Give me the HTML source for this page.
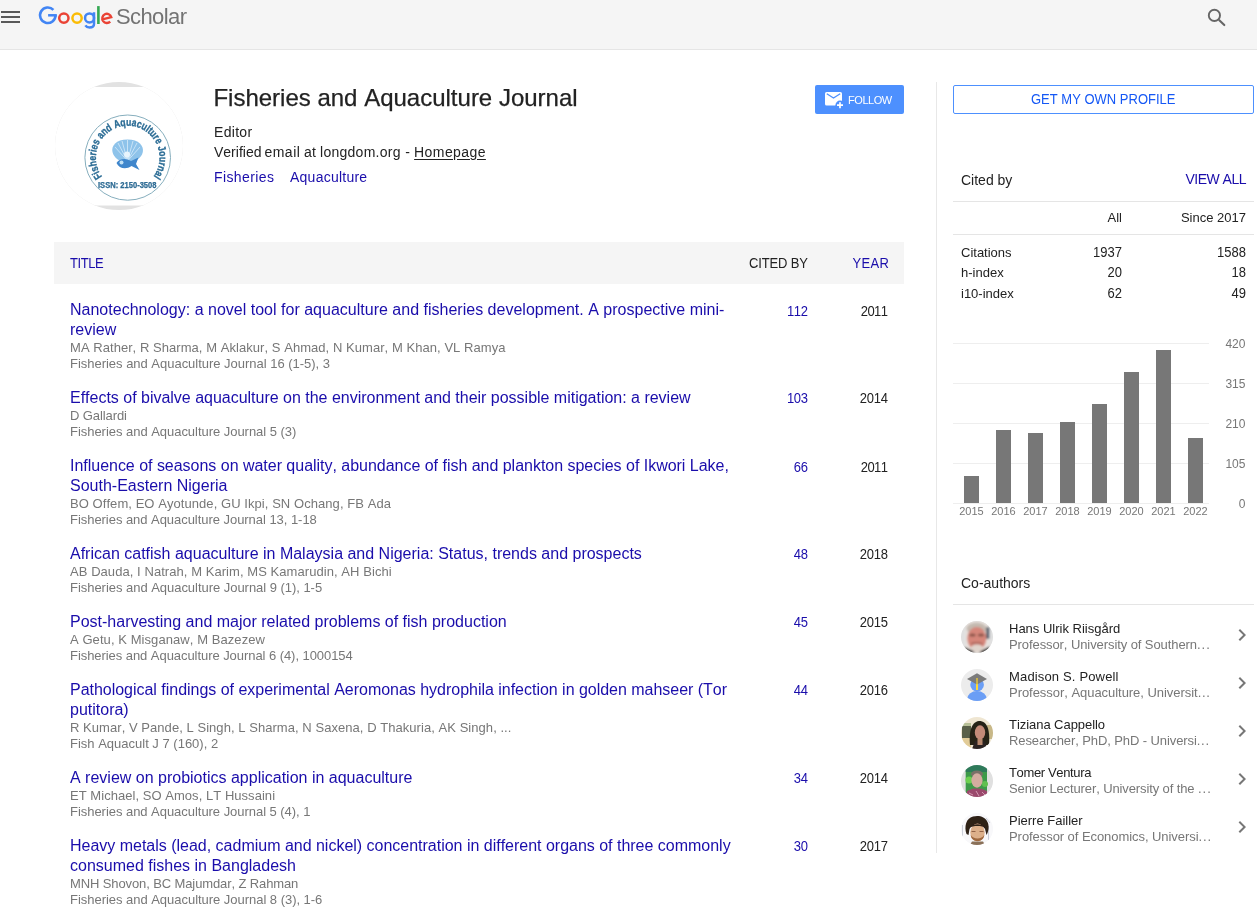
<!DOCTYPE html>
<html><head><meta charset="utf-8">
<style>
*{margin:0;padding:0;box-sizing:border-box}
html,body{width:1257px;height:910px;overflow:hidden;background:#fff}
body{font-family:"Liberation Sans",sans-serif;color:#222;font-size:13px;position:relative;-webkit-font-smoothing:antialiased;font-kerning:none}
.a{position:absolute;white-space:nowrap}
#root{position:absolute;left:0;top:0;width:1257px;height:910px;will-change:transform}
</style></head><body><div id="root">
<div class="a" style="left:0;top:0;width:1257px;height:49px;background:#f5f5f5"></div>
<div class="a" style="left:0;top:49px;width:1257px;height:1px;background:#e5e5e5"></div>
<svg class="a" style="left:-2px;top:5px" width="24" height="24" viewBox="0 0 24 24"><path fill="#595959" d="M3 18h19v-2H3v2zm0-5h19v-2H3v2zm0-7v2h19V6H3z"/></svg>
<svg class="a" style="left:0;top:0" width="200" height="40" viewBox="0 0 200 40">
<path d="M53.4 9.9 A7.75 7.75 0 1 0 55.55 15.3" fill="none" stroke="#4285f4" stroke-width="2.6"/>
<rect x="48.1" y="14.05" width="8.75" height="2.5" fill="#4285f4"/>
<circle cx="63.85" cy="18.1" r="4.65" fill="none" stroke="#ea4335" stroke-width="2.5"/>
<circle cx="77.05" cy="18.1" r="4.65" fill="none" stroke="#fbbc05" stroke-width="2.5"/>
<circle cx="89.55" cy="17.9" r="4.5" fill="none" stroke="#4285f4" stroke-width="2.5"/>
<path d="M94 12.2 V24 C94 26.6 92.1 27.5 89.6 27.5 C87.6 27.5 86.2 26.7 85.4 25.4" fill="none" stroke="#4285f4" stroke-width="2.5"/>
<rect x="97.1" y="6.1" width="2.6" height="17.9" fill="#34a853"/>
<path d="M102.3 19.3 L111.3 17.2 A4.6 4.6 0 1 0 110.2 21.6" fill="none" stroke="#ea4335" stroke-width="2.4"/>
</svg>
<div class="a" style="left:116px;top:2px;font-size:22px;line-height:30px;color:#737373;letter-spacing:-0.6px">Scholar</div>
<svg class="a" style="left:1200px;top:3px" width="32" height="30" viewBox="0 0 32 30"><circle cx="14.4" cy="12.4" r="5.6" fill="none" stroke="#666" stroke-width="1.9"/><path d="M19.3 17.2 L24.3 22.1" stroke="#666" stroke-width="2.1" stroke-linecap="round"/></svg>
<svg class="a" style="left:55px;top:82px" width="128" height="128" viewBox="55 82 128 128">
<defs><clipPath id="pc"><circle cx="119" cy="146" r="64"/></clipPath>
<path id="arc" d="M102.3 176.7 A31.8 31.8 0 1 1 153.1 176.7"/></defs>
<g clip-path="url(#pc)">
<rect x="55" y="82" width="128" height="128" fill="#e2e2e2"/>
<rect x="55" y="87" width="128" height="118.5" fill="#fff"/>
<ellipse cx="127.7" cy="157.6" rx="42.8" ry="42.6" fill="none" stroke="#86aebd" stroke-width="1"/>
<text font-family="Liberation Sans" font-weight="bold" font-size="10.8" fill="#2b6c95" stroke="#2b6c95" stroke-width="0.35"><textPath href="#arc" textLength="140" lengthAdjust="spacingAndGlyphs">Fisheries and Aquaculture Journal</textPath></text>
<text x="98" y="187.6" font-family="Liberation Sans" font-weight="bold" font-size="8.2" fill="#2d6b94" stroke="#2d6b94" stroke-width="0.25" textLength="58.5" lengthAdjust="spacingAndGlyphs">ISSN: 2150-3508</text>
<path d="M112.5 152 C111 146 116 139.5 127.5 139.5 C139 139.5 144 146 142.8 152 C141.5 158 136 162 127.5 162 C119 162 114 158 112.5 152 Z" fill="#8ec3ea"/>
<g stroke="#cfe6f7" stroke-width="0.9">
<path d="M127.5 161 L115 147"/><path d="M127.5 161 L118 143"/><path d="M127.5 161 L122 141"/><path d="M127.5 161 L127.5 140"/><path d="M127.5 161 L133 141"/><path d="M127.5 161 L137 143"/><path d="M127.5 161 L140 147"/>
</g>
<circle cx="127" cy="154.5" r="3" fill="#e8f4fc"/>
<path d="M116.5 163 C119 158.5 126 157.5 131 161 L138.5 157.5 L136 164 L139.5 170 L131.5 166 C126 170 119 168.5 116.5 163 Z" fill="#3f86cc"/>
<circle cx="121.5" cy="162.5" r="2" fill="#bfe0f5"/>
</g></svg>
<div class="a" style="left:213.4px;top:85.68px;font-size:24px;line-height:24px;color:#222;-webkit-text-stroke:0.25px #222">Fisheries and Aquaculture Journal</div>
<div class="a" style="left:214px;top:124.65px;font-size:14px;line-height:14px;color:#222;letter-spacing:0.3px">Editor</div>
<div class="a" style="left:214px;top:144.65px;font-size:14px;line-height:14px;color:#222;letter-spacing:0px">Verified</div>
<div class="a" style="left:264.4px;top:144.65px;font-size:14px;line-height:14px;color:#222;letter-spacing:0.5px">email</div>
<div class="a" style="left:304px;top:144.65px;font-size:14px;line-height:14px;color:#222;letter-spacing:0.2px">at</div>
<div class="a" style="left:320.05px;top:144.65px;font-size:14px;line-height:14px;color:#222;letter-spacing:0.26px">longdom.org</div>
<div class="a" style="left:405.2px;top:144.65px;font-size:14px;line-height:14px;color:#222;letter-spacing:0px">-</div>
<div class="a" style="left:414.1px;top:144.65px;font-size:14px;line-height:14px;color:#222;letter-spacing:0.41px"><span style="text-decoration:underline;text-underline-offset:2.4px">Homepage</span></div>
<div class="a" style="left:214px;top:169.65px;font-size:14px;line-height:14px;color:#1a0dab;"><span style="color:#1a0dab;letter-spacing:0.4px">Fisheries</span><span style="color:#1a0dab;margin-left:15.6px;letter-spacing:0.24px">Aquaculture</span></div>
<div class="a" style="left:815px;top:85px;width:89px;height:29px;background:#4d90fe;border-radius:2px"></div>
<svg class="a" style="left:820px;top:88px" width="28" height="24" viewBox="820 88 28 24"><rect x="825" y="92" width="17" height="13.5" rx="1.6" fill="#fff"/><path d="M826.8 93.8 L833.5 98 L840.2 93.8" fill="none" stroke="#4d90fe" stroke-width="1.3"/><circle cx="840" cy="105.2" r="4.6" fill="#4d90fe"/><path d="M840 102.2 V108.2 M837 105.2 H843" stroke="#fff" stroke-width="1.7"/></svg>
<div class="a" style="left:848px;top:94.69px;font-size:11px;line-height:11px;color:#fff;letter-spacing:-0.44px">FOLLOW</div>
<div class="a" style="left:936px;top:82px;width:1px;height:771px;background:#e8e8e8"></div>
<div class="a" style="left:54px;top:242px;width:850px;height:42px;background:#f5f5f5"></div>
<div class="a" style="left:70px;top:257.00px;font-size:13px;line-height:13px;color:#1a0dab;transform:scaleY(1.07);transform-origin:0 11.00px;letter-spacing:-0.4px">TITLE</div>
<div class="a" style="right:449px;top:257.00px;font-size:13px;line-height:13px;color:#222;text-align:right;transform:scaleY(1.07);transform-origin:0 11.00px;letter-spacing:-0.15px;margin-right:0.15px">CITED BY</div>
<div class="a" style="right:369px;top:257.00px;font-size:13px;line-height:13px;color:#1a0dab;text-align:right;transform:scaleY(1.07);transform-origin:0 11.00px;letter-spacing:0.3px;margin-right:-1.1px">YEAR</div>
<div class="a" style="left:70px;top:302.46px;font-size:16px;line-height:16px;color:#1a0dab;letter-spacing:0.0078px">Nanotechnology: a novel tool for aquaculture and fisheries development. A prospective mini-</div>
<div class="a" style="left:70px;top:322.46px;font-size:16px;line-height:16px;color:#1a0dab;letter-spacing:0.0000px">review</div>
<div class="a" style="left:70px;top:341.00px;font-size:13px;line-height:13px;color:#777;letter-spacing:0.0523px">MA Rather, R Sharma, M Aklakur, S Ahmad, N Kumar, M Khan, VL Ramya</div>
<div class="a" style="left:70px;top:357.00px;font-size:13px;line-height:13px;color:#777;letter-spacing:-0.0205px">Fisheries and Aquaculture Journal 16 (1-5), 3</div>
<div class="a" style="right:449px;top:305.00px;font-size:13px;line-height:13px;color:#1a0dab;text-align:right;transform:scaleY(1.07);transform-origin:0 11.00px;letter-spacing:-0.3px;margin-right:0.3px">112</div>
<div class="a" style="right:369px;top:305.00px;font-size:13px;line-height:13px;color:#222;text-align:right;transform:scaleY(1.07);transform-origin:0 11.00px;letter-spacing:-0.55px;margin-right:0.55px">2011</div>
<div class="a" style="left:70px;top:390.46px;font-size:16px;line-height:16px;color:#1a0dab;letter-spacing:-0.0125px">Effects of bivalve aquaculture on the environment and their possible mitigation: a review</div>
<div class="a" style="left:70px;top:409.00px;font-size:13px;line-height:13px;color:#777;letter-spacing:-0.1000px">D Gallardi</div>
<div class="a" style="left:70px;top:425.00px;font-size:13px;line-height:13px;color:#777;letter-spacing:-0.0342px">Fisheries and Aquaculture Journal 5 (3)</div>
<div class="a" style="right:449px;top:392.00px;font-size:13px;line-height:13px;color:#1a0dab;text-align:right;transform:scaleY(1.07);transform-origin:0 11.00px;letter-spacing:-0.3px;margin-right:0.3px">103</div>
<div class="a" style="right:369px;top:392.00px;font-size:13px;line-height:13px;color:#222;text-align:right;transform:scaleY(1.07);transform-origin:0 11.00px;letter-spacing:-0.2px;margin-right:0.2px">2014</div>
<div class="a" style="left:70px;top:458.46px;font-size:16px;line-height:16px;color:#1a0dab;letter-spacing:-0.0217px">Influence of seasons on water quality, abundance of fish and plankton species of Ikwori Lake,</div>
<div class="a" style="left:70px;top:478.46px;font-size:16px;line-height:16px;color:#1a0dab;letter-spacing:0.0000px">South-Eastern Nigeria</div>
<div class="a" style="left:70px;top:497.00px;font-size:13px;line-height:13px;color:#777;letter-spacing:0.0625px">BO Offem, EO Ayotunde, GU Ikpi, SN Ochang, FB Ada</div>
<div class="a" style="left:70px;top:513.00px;font-size:13px;line-height:13px;color:#777;letter-spacing:-0.0439px">Fisheries and Aquaculture Journal 13, 1-18</div>
<div class="a" style="right:449px;top:461.00px;font-size:13px;line-height:13px;color:#1a0dab;text-align:right;transform:scaleY(1.07);transform-origin:0 11.00px;letter-spacing:-0.3px;margin-right:0.3px">66</div>
<div class="a" style="right:369px;top:461.00px;font-size:13px;line-height:13px;color:#222;text-align:right;transform:scaleY(1.07);transform-origin:0 11.00px;letter-spacing:-0.55px;margin-right:0.55px">2011</div>
<div class="a" style="left:70px;top:546.46px;font-size:16px;line-height:16px;color:#1a0dab;letter-spacing:0.0000px">African catfish aquaculture in Malaysia and Nigeria: Status, trends and prospects</div>
<div class="a" style="left:70px;top:565.00px;font-size:13px;line-height:13px;color:#777;letter-spacing:0.0600px">AB Dauda, I Natrah, M Karim, MS Kamarudin, AH Bichi</div>
<div class="a" style="left:70px;top:581.00px;font-size:13px;line-height:13px;color:#777;letter-spacing:-0.0349px">Fisheries and Aquaculture Journal 9 (1), 1-5</div>
<div class="a" style="right:449px;top:548.00px;font-size:13px;line-height:13px;color:#1a0dab;text-align:right;transform:scaleY(1.07);transform-origin:0 11.00px;letter-spacing:-0.3px;margin-right:0.3px">48</div>
<div class="a" style="right:369px;top:548.00px;font-size:13px;line-height:13px;color:#222;text-align:right;transform:scaleY(1.07);transform-origin:0 11.00px;letter-spacing:-0.2px;margin-right:0.2px">2018</div>
<div class="a" style="left:70px;top:614.46px;font-size:16px;line-height:16px;color:#1a0dab;letter-spacing:0.0000px">Post-harvesting and major related problems of fish production</div>
<div class="a" style="left:70px;top:633.00px;font-size:13px;line-height:13px;color:#777;letter-spacing:0.0714px">A Getu, K Misganaw, M Bazezew</div>
<div class="a" style="left:70px;top:649.00px;font-size:13px;line-height:13px;color:#777;letter-spacing:-0.0574px">Fisheries and Aquaculture Journal 6 (4), 1000154</div>
<div class="a" style="right:449px;top:616.00px;font-size:13px;line-height:13px;color:#1a0dab;text-align:right;transform:scaleY(1.07);transform-origin:0 11.00px;letter-spacing:-0.3px;margin-right:0.3px">45</div>
<div class="a" style="right:369px;top:616.00px;font-size:13px;line-height:13px;color:#222;text-align:right;transform:scaleY(1.07);transform-origin:0 11.00px;letter-spacing:-0.2px;margin-right:0.2px">2015</div>
<div class="a" style="left:70px;top:682.46px;font-size:16px;line-height:16px;color:#1a0dab;letter-spacing:-0.0222px">Pathological findings of experimental Aeromonas hydrophila infection in golden mahseer (Tor</div>
<div class="a" style="left:70px;top:702.46px;font-size:16px;line-height:16px;color:#1a0dab;letter-spacing:0.0000px">putitora)</div>
<div class="a" style="left:70px;top:721.00px;font-size:13px;line-height:13px;color:#777;letter-spacing:0.0493px">R Kumar, V Pande, L Singh, L Sharma, N Saxena, D Thakuria, AK Singh, ...</div>
<div class="a" style="left:70px;top:737.00px;font-size:13px;line-height:13px;color:#777;letter-spacing:0.0000px">Fish Aquacult J 7 (160), 2</div>
<div class="a" style="right:449px;top:684.00px;font-size:13px;line-height:13px;color:#1a0dab;text-align:right;transform:scaleY(1.07);transform-origin:0 11.00px;letter-spacing:-0.3px;margin-right:0.3px">44</div>
<div class="a" style="right:369px;top:684.00px;font-size:13px;line-height:13px;color:#222;text-align:right;transform:scaleY(1.07);transform-origin:0 11.00px;letter-spacing:-0.2px;margin-right:0.2px">2016</div>
<div class="a" style="left:70px;top:770.46px;font-size:16px;line-height:16px;color:#1a0dab;letter-spacing:0.0000px">A review on probiotics application in aquaculture</div>
<div class="a" style="left:70px;top:789.00px;font-size:13px;line-height:13px;color:#777;letter-spacing:0.0419px">ET Michael, SO Amos, LT Hussaini</div>
<div class="a" style="left:70px;top:805.00px;font-size:13px;line-height:13px;color:#777;letter-spacing:-0.0390px">Fisheries and Aquaculture Journal 5 (4), 1</div>
<div class="a" style="right:449px;top:772.00px;font-size:13px;line-height:13px;color:#1a0dab;text-align:right;transform:scaleY(1.07);transform-origin:0 11.00px;letter-spacing:-0.3px;margin-right:0.3px">34</div>
<div class="a" style="right:369px;top:772.00px;font-size:13px;line-height:13px;color:#222;text-align:right;transform:scaleY(1.07);transform-origin:0 11.00px;letter-spacing:-0.2px;margin-right:0.2px">2014</div>
<div class="a" style="left:70px;top:838.46px;font-size:16px;line-height:16px;color:#1a0dab;letter-spacing:-0.0111px">Heavy metals (lead, cadmium and nickel) concentration in different organs of three commonly</div>
<div class="a" style="left:70px;top:858.46px;font-size:16px;line-height:16px;color:#1a0dab;letter-spacing:0.0000px">consumed fishes in Bangladesh</div>
<div class="a" style="left:70px;top:877.00px;font-size:13px;line-height:13px;color:#777;letter-spacing:-0.1125px">MNH Shovon, BC Majumdar, Z Rahman</div>
<div class="a" style="left:70px;top:893.00px;font-size:13px;line-height:13px;color:#777;letter-spacing:-0.0302px">Fisheries and Aquaculture Journal 8 (3), 1-6</div>
<div class="a" style="right:449px;top:840.00px;font-size:13px;line-height:13px;color:#1a0dab;text-align:right;transform:scaleY(1.07);transform-origin:0 11.00px;letter-spacing:-0.3px;margin-right:0.3px">30</div>
<div class="a" style="right:369px;top:840.00px;font-size:13px;line-height:13px;color:#222;text-align:right;transform:scaleY(1.07);transform-origin:0 11.00px;letter-spacing:-0.2px;margin-right:0.2px">2017</div>
<div class="a" style="left:953px;top:85px;width:301px;height:29px;border:1px solid #4d90fe;border-radius:2px"></div>
<div class="a" style="left:1031px;top:93.00px;font-size:13px;line-height:13px;color:#1558f5;transform:scaleY(1.07);transform-origin:0 11.00px;">GET MY OWN PROFILE</div>
<div class="a" style="left:961px;top:173.15px;font-size:14px;line-height:14px;color:#222;">Cited by</div>
<div class="a" style="right:11px;top:172.15px;font-size:14px;line-height:14px;color:#1a0dab;text-align:right;letter-spacing:-0.5px">VIEW ALL</div>
<div class="a" style="left:953px;top:201px;width:301px;height:1px;background:#e5e5e5"></div>
<div class="a" style="right:135px;top:211.00px;font-size:13px;line-height:13px;color:#222;text-align:right;">All</div>
<div class="a" style="right:11px;top:211.00px;font-size:13px;line-height:13px;color:#222;text-align:right;">Since 2017</div>
<div class="a" style="left:953px;top:234px;width:301px;height:1px;background:#e5e5e5"></div>
<div class="a" style="left:961px;top:245.50px;font-size:13px;line-height:13px;color:#222;">Citations</div>
<div class="a" style="right:135px;top:245.50px;font-size:13px;line-height:13px;color:#222;text-align:right;transform:scaleY(1.07);transform-origin:0 11.00px;">1937</div>
<div class="a" style="right:11px;top:245.50px;font-size:13px;line-height:13px;color:#222;text-align:right;transform:scaleY(1.07);transform-origin:0 11.00px;">1588</div>
<div class="a" style="left:961px;top:266.00px;font-size:13px;line-height:13px;color:#222;">h-index</div>
<div class="a" style="right:135px;top:266.00px;font-size:13px;line-height:13px;color:#222;text-align:right;transform:scaleY(1.07);transform-origin:0 11.00px;">20</div>
<div class="a" style="right:11px;top:266.00px;font-size:13px;line-height:13px;color:#222;text-align:right;transform:scaleY(1.07);transform-origin:0 11.00px;">18</div>
<div class="a" style="left:961px;top:286.50px;font-size:13px;line-height:13px;color:#222;">i10-index</div>
<div class="a" style="right:135px;top:286.50px;font-size:13px;line-height:13px;color:#222;text-align:right;transform:scaleY(1.07);transform-origin:0 11.00px;">62</div>
<div class="a" style="right:11px;top:286.50px;font-size:13px;line-height:13px;color:#222;text-align:right;transform:scaleY(1.07);transform-origin:0 11.00px;">49</div>
<div class="a" style="left:953px;top:343px;width:256px;height:1px;background:#eee"></div>
<div class="a" style="left:953px;top:383px;width:256px;height:1px;background:#eee"></div>
<div class="a" style="left:953px;top:423px;width:256px;height:1px;background:#eee"></div>
<div class="a" style="left:953px;top:463px;width:256px;height:1px;background:#eee"></div>
<div class="a" style="left:953px;top:503px;width:256px;height:1px;background:#eee"></div>
<div class="a" style="right:11.599999999999909px;top:338.44px;font-size:12px;line-height:12px;color:#777;text-align:right;">420</div>
<div class="a" style="right:11.599999999999909px;top:378.44px;font-size:12px;line-height:12px;color:#777;text-align:right;">315</div>
<div class="a" style="right:11.599999999999909px;top:418.44px;font-size:12px;line-height:12px;color:#777;text-align:right;">210</div>
<div class="a" style="right:11.599999999999909px;top:458.44px;font-size:12px;line-height:12px;color:#777;text-align:right;">105</div>
<div class="a" style="right:11.599999999999909px;top:498.44px;font-size:12px;line-height:12px;color:#777;text-align:right;">0</div>
<div class="a" style="left:964px;top:476px;width:15px;height:27px;background:#777"></div>
<div class="a" style="left:944px;top:506.19px;width:55px;text-align:center;font-size:11px;line-height:11px;color:#777">2015</div>
<div class="a" style="left:996px;top:430px;width:15px;height:73px;background:#777"></div>
<div class="a" style="left:976px;top:506.19px;width:55px;text-align:center;font-size:11px;line-height:11px;color:#777">2016</div>
<div class="a" style="left:1028px;top:433px;width:15px;height:70px;background:#777"></div>
<div class="a" style="left:1008px;top:506.19px;width:55px;text-align:center;font-size:11px;line-height:11px;color:#777">2017</div>
<div class="a" style="left:1060px;top:422px;width:15px;height:81px;background:#777"></div>
<div class="a" style="left:1040px;top:506.19px;width:55px;text-align:center;font-size:11px;line-height:11px;color:#777">2018</div>
<div class="a" style="left:1092px;top:404px;width:15px;height:99px;background:#777"></div>
<div class="a" style="left:1072px;top:506.19px;width:55px;text-align:center;font-size:11px;line-height:11px;color:#777">2019</div>
<div class="a" style="left:1124px;top:372px;width:15px;height:131px;background:#777"></div>
<div class="a" style="left:1104px;top:506.19px;width:55px;text-align:center;font-size:11px;line-height:11px;color:#777">2020</div>
<div class="a" style="left:1156px;top:350px;width:15px;height:153px;background:#777"></div>
<div class="a" style="left:1136px;top:506.19px;width:55px;text-align:center;font-size:11px;line-height:11px;color:#777">2021</div>
<div class="a" style="left:1188px;top:438px;width:15px;height:65px;background:#777"></div>
<div class="a" style="left:1168px;top:506.19px;width:55px;text-align:center;font-size:11px;line-height:11px;color:#777">2022</div>
<div class="a" style="left:961px;top:576.15px;font-size:14px;line-height:14px;color:#222;">Co-authors</div>
<div class="a" style="left:953px;top:604px;width:301px;height:1px;background:#e5e5e5"></div>
<svg class="a" style="left:961px;top:621px" width="32" height="32" viewBox="0 0 32 32"><defs><clipPath id="c0"><circle cx="16" cy="16" r="16"/></clipPath><filter id="b0" x="-20%" y="-20%" width="140%" height="140%"><feGaussianBlur stdDeviation="1"/></filter></defs><g clip-path="url(#c0)">
<rect width="32" height="32" fill="#e0e0e0"/>
<g filter="url(#b0)">
<rect x="4.7" y="0" width="23.5" height="32" fill="#e8e2de"/>
<rect x="25" y="6" width="3.2" height="12" fill="#5a6470"/>
<ellipse cx="15.5" cy="7.5" rx="10" ry="6" fill="#c4bab0"/>
<ellipse cx="15.8" cy="17.5" rx="9.6" ry="11.5" fill="#d6867a"/>
<ellipse cx="11.5" cy="14" rx="3.2" ry="1.6" fill="#8a5448"/>
<ellipse cx="20" cy="14" rx="3.2" ry="1.6" fill="#8a5448"/>
<path d="M10 23 C12 21.5 19 21.5 21.5 23" stroke="#9a5a50" stroke-width="1.2" fill="none"/>
<ellipse cx="16" cy="27.5" rx="6.5" ry="4" fill="#e0d4cc"/>
<path d="M2 32 L3.5 26 L11 29.5 L14 32 Z" fill="#181618"/>
<path d="M30 32 L28.5 25.5 L21 29.5 L18 32 Z" fill="#181618"/>
</g></g></svg>
<div class="a" style="left:1009px;top:621.60px;font-size:13px;line-height:13px;color:#222;letter-spacing:0px">Hans Ulrik Riisgård</div>
<div class="a" style="left:1009px;top:637.50px;font-size:13px;line-height:13px;color:#777;"><span style="letter-spacing:-0.0848px">Professor, University of Southern</span><span style="letter-spacing:1.00px">...</span></div>
<svg class="a" style="left:1229.7px;top:623px" width="24" height="24" viewBox="0 0 24 24"><path fill="#777" d="M10 6L8.59 7.41 13.17 12l-4.58 4.59L10 18l6-6z"/></svg>
<svg class="a" style="left:961px;top:669px" width="32" height="32" viewBox="0 0 32 32"><circle cx="16" cy="16" r="16" fill="#ececec"/>
<defs><clipPath id="c1"><circle cx="16" cy="16" r="16"/></clipPath></defs><g clip-path="url(#c1)">
<circle cx="16.1" cy="15.8" r="6.8" fill="#6b9ef5"/>
<ellipse cx="16" cy="30.5" rx="10" ry="8.5" fill="#6b9ef5"/>
</g>
<path d="M6 10 L16 4.2 L26 10 L16 15.4 Z" fill="#7b7b7b"/>
<rect x="15" y="9" width="2" height="12" fill="#fdd835"/>
<rect x="15" y="9" width="2" height="6.2" fill="#c9b24a"/></svg>
<div class="a" style="left:1009px;top:669.60px;font-size:13px;line-height:13px;color:#222;letter-spacing:0.16px">Madison S. Powell</div>
<div class="a" style="left:1009px;top:685.50px;font-size:13px;line-height:13px;color:#777;"><span style="letter-spacing:-0.0424px">Professor, Aquaculture, Universit</span><span style="letter-spacing:0.65px">...</span></div>
<svg class="a" style="left:1229.7px;top:671px" width="24" height="24" viewBox="0 0 24 24"><path fill="#777" d="M10 6L8.59 7.41 13.17 12l-4.58 4.59L10 18l6-6z"/></svg>
<svg class="a" style="left:961px;top:717px" width="32" height="32" viewBox="0 0 32 32"><defs><clipPath id="c2"><circle cx="16" cy="16" r="16"/></clipPath><filter id="b2" x="-10%" y="-10%" width="120%" height="120%"><feGaussianBlur stdDeviation="0.7"/></filter></defs><g clip-path="url(#c2)"><g filter="url(#b2)">
<rect width="32" height="32" fill="#efe6d2"/>
<rect x="1" y="6" width="9" height="4" fill="#b8c098"/>
<rect x="1" y="9" width="9" height="13" fill="#5a6048"/>
<rect x="1" y="21" width="9" height="11" fill="#e2cc98"/>
<rect x="26" y="8" width="6" height="14" fill="#c8b888"/>
<path d="M9 28 C8 18 9 5 18 4 C27 4 29 14 28 28 Z" fill="#262418"/>
<ellipse cx="19" cy="15.5" rx="5.2" ry="7.2" fill="#c48a78"/>
<path d="M11 32 L14 24 L23 24 L27 32 Z" fill="#2c2020"/>
<rect x="16.5" y="22" width="5" height="6" fill="#b8886e"/>
</g></g></svg>
<div class="a" style="left:1009px;top:717.60px;font-size:13px;line-height:13px;color:#222;letter-spacing:-0.05px">Tiziana Cappello</div>
<div class="a" style="left:1009px;top:733.50px;font-size:13px;line-height:13px;color:#777;"><span style="letter-spacing:-0.0968px">Researcher, PhD, PhD - Universi</span><span style="letter-spacing:0.75px">...</span></div>
<svg class="a" style="left:1229.7px;top:719px" width="24" height="24" viewBox="0 0 24 24"><path fill="#777" d="M10 6L8.59 7.41 13.17 12l-4.58 4.59L10 18l6-6z"/></svg>
<svg class="a" style="left:961px;top:765px" width="32" height="32" viewBox="0 0 32 32"><defs><clipPath id="c3"><circle cx="16" cy="16" r="16"/></clipPath><filter id="b3" x="-10%" y="-10%" width="120%" height="120%"><feGaussianBlur stdDeviation="0.7"/></filter></defs><g clip-path="url(#c3)">
<rect width="32" height="32" fill="#e0e0e0"/>
<g filter="url(#b3)">
<rect x="4.7" y="0" width="21.3" height="32" fill="#3e9a48"/>
<rect x="4.7" y="0" width="21.3" height="7" fill="#2e7a5a"/>
<circle cx="8" cy="15" r="3.5" fill="#6cd050"/>
<circle cx="24" cy="19" r="3" fill="#60c050"/>
<ellipse cx="16" cy="9" rx="6" ry="3.5" fill="#7a7068"/>
<ellipse cx="16" cy="15.5" rx="5.6" ry="7.2" fill="#d4aca0"/>
<path d="M4.7 32 L6 26 L12 23.5 L20 23.5 L26 26 L26 32 Z" fill="#9a4a6c"/>
<path d="M8 28 L12 30 M15 26 L18 31 M21 27 L24 30" stroke="#d8a0b8" stroke-width="0.9"/>
</g></g></svg>
<div class="a" style="left:1009px;top:765.60px;font-size:13px;line-height:13px;color:#222;letter-spacing:-0.36px">Tomer Ventura</div>
<div class="a" style="left:1009px;top:781.50px;font-size:13px;line-height:13px;color:#777;"><span style="letter-spacing:-0.1143px">Senior Lecturer, University of the </span><span style="letter-spacing:1.05px">...</span></div>
<svg class="a" style="left:1229.7px;top:767px" width="24" height="24" viewBox="0 0 24 24"><path fill="#777" d="M10 6L8.59 7.41 13.17 12l-4.58 4.59L10 18l6-6z"/></svg>
<svg class="a" style="left:961px;top:813px" width="32" height="32" viewBox="0 0 32 32"><defs><clipPath id="c4"><circle cx="16" cy="16" r="16"/></clipPath><filter id="b4" x="-10%" y="-10%" width="120%" height="120%"><feGaussianBlur stdDeviation="0.6"/></filter></defs><g clip-path="url(#c4)">
<rect width="32" height="32" fill="#f8f8fa"/>
<path d="M1.5 12 V26 M27.5 13 V27 M25 5 L29 10" stroke="#b8bcc8" stroke-width="0.7"/>
<g filter="url(#b4)">
<path d="M5.5 21 C3 14 5 5 12 3.5 C17 2 24 3 26.5 9 C28.5 13 27.5 19 25.5 22 L24 16 C22 12 11 11 8.5 16 L7.5 22 Z" fill="#2e2018"/>
<ellipse cx="16.5" cy="19.5" rx="7.2" ry="9" fill="#ddb08a"/>
<path d="M9 14.5 C11 10 22 10 24 14.5 C22 12.5 11 12.5 9 14.5 Z" fill="#2e2018"/>
<path d="M10.5 18.5 H14.5 M18.5 18.5 H22.5" stroke="#8a5a40" stroke-width="0.9"/>
<path d="M9.8 22 C10 30 23 30 23.2 22 C21 26.5 12 26.5 9.8 22 Z" fill="#a06a40"/>
<path d="M9 32 L11 28.5 L22 28.5 L24 32 Z" fill="#8a7058"/>
</g></g></svg>
<div class="a" style="left:1009px;top:813.60px;font-size:13px;line-height:13px;color:#222;letter-spacing:0px">Pierre Failler</div>
<div class="a" style="left:1009px;top:829.50px;font-size:13px;line-height:13px;color:#777;"><span style="letter-spacing:-0.0625px">Professor of Economics, Universi</span><span style="letter-spacing:0.95px">...</span></div>
<svg class="a" style="left:1229.7px;top:815px" width="24" height="24" viewBox="0 0 24 24"><path fill="#777" d="M10 6L8.59 7.41 13.17 12l-4.58 4.59L10 18l6-6z"/></svg>
</div></body></html>
